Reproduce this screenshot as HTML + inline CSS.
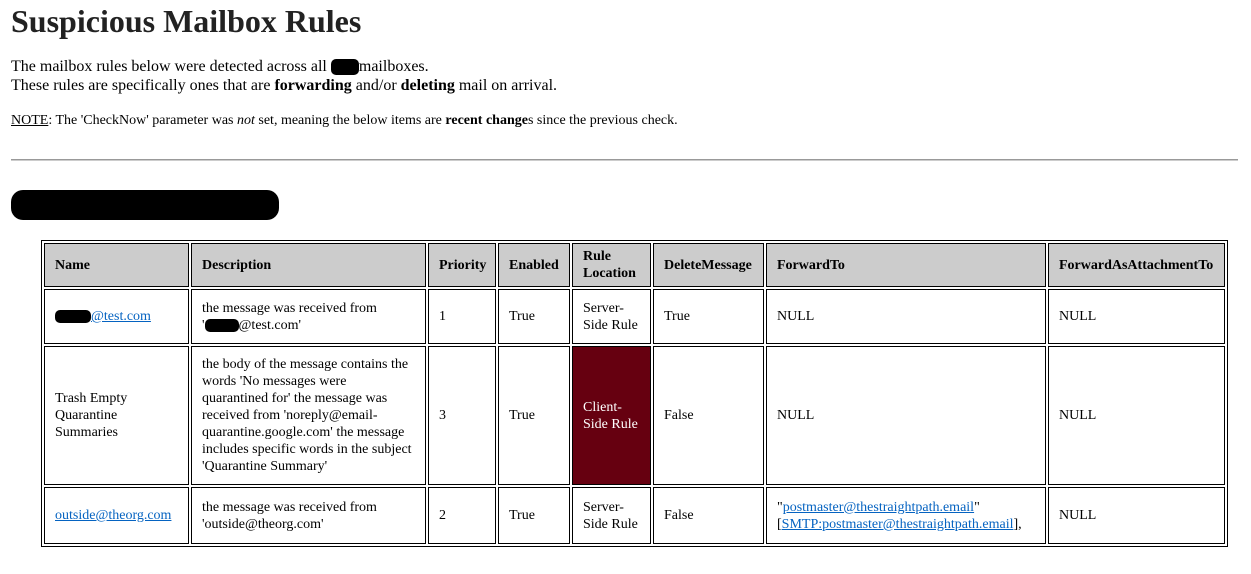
<!DOCTYPE html>
<html><head><meta charset="utf-8"><style>
body{margin:0;font-family:"Liberation Serif",serif;color:#000;background:#fff;}
h1{position:absolute;left:11px;top:3px;margin:0;font-size:32px;font-weight:bold;color:#222;}
.p1{position:absolute;left:11px;top:57px;font-size:16px;line-height:19px;}
.p2{position:absolute;left:11px;top:113px;font-size:14px;}
hr{position:absolute;left:11px;top:159px;width:1227px;margin:0;border:0;border-top:1px solid #999;border-bottom:1px solid #ccc;}
.blob{position:absolute;background:#000;border-radius:12px;}
table{position:absolute;left:41px;top:240px;border:1px solid #000;border-spacing:2px;table-layout:fixed;width:1186px;font-size:14px;}
td,th{border:1px solid #000;box-sizing:border-box;padding:0 10px;text-align:left;vertical-align:middle;line-height:17px;}
th{background:#ccc;font-weight:bold;}
a{color:#0563c1;}
.red{background:#660010;color:#fff;}
.k{display:inline-block;background:#000;border-radius:5px;height:13px;vertical-align:middle;}
.d{padding-right:13px;}
</style></head><body>
<h1>Suspicious Mailbox Rules</h1>
<div class="p1">The mailbox rules below were detected across all <span class="k" style="width:28px;height:16px"></span>mailboxes.<br>These rules are specifically ones that are <b>forwarding</b> and/or <b>deleting</b> mail on arrival.</div>
<div class="p2"><u>NOTE</u>: The 'CheckNow' parameter was <i>not</i> set, meaning the below items are <b>recent change</b>s since the previous check.</div>
<hr>
<div class="blob" style="left:11px;top:190px;width:268px;height:30px"></div>
<table>
<colgroup><col style="width:145px"><col style="width:235px"><col style="width:68px"><col style="width:72px"><col style="width:79px"><col style="width:111px"><col style="width:280px"><col style="width:177px"></colgroup>
<tr style="height:44px"><th>Name</th><th>Description</th><th>Priority</th><th>Enabled</th><th>Rule Location</th><th>DeleteMessage</th><th>ForwardTo</th><th>ForwardAsAttachmentTo</th></tr>
<tr style="height:55px"><td><span class="k" style="width:36px"></span><a href="#">@test.com</a></td><td class="d">the message was received from <span style="white-space:nowrap">'<span class="k" style="width:34px"></span>@test.com'</span></td><td>1</td><td>True</td><td>Server-Side Rule</td><td>True</td><td>NULL</td><td>NULL</td></tr>
<tr style="height:139px"><td>Trash Empty Quarantine Summaries</td><td class="d">the body of the message contains the words 'No messages were quarantined for' the message was received from 'noreply@email-quarantine.google.com' the message includes specific words in the subject 'Quarantine Summary'</td><td>3</td><td>True</td><td class="red">Client-Side Rule</td><td>False</td><td>NULL</td><td>NULL</td></tr>
<tr style="height:57px"><td><a href="#">outside@theorg.com</a></td><td class="d">the message was received from 'outside@theorg.com'</td><td>2</td><td>True</td><td>Server-Side Rule</td><td>False</td><td>"<a href="#">postmaster@thestraightpath.email</a>" [<a href="#">SMTP:postmaster@thestraightpath.email</a>],</td><td>NULL</td></tr>
</table>
</body></html>
